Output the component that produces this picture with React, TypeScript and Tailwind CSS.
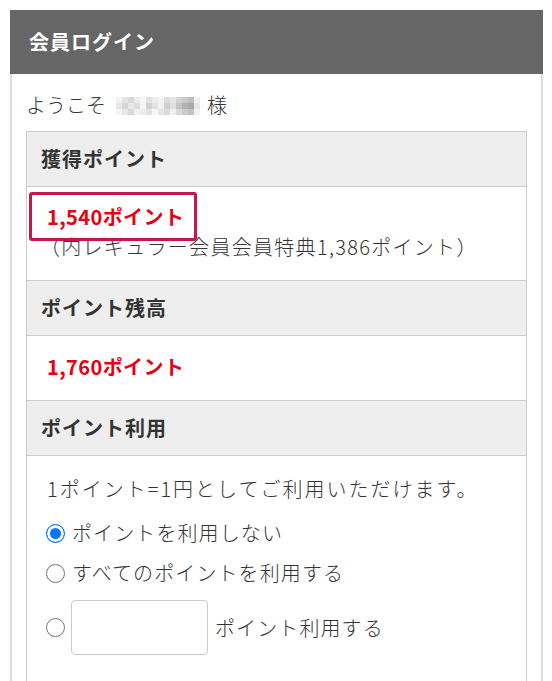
import { ReactNode } from 'react';

const font = "font-['Noto_Sans_CJK_JP','Noto_Sans',sans-serif]";

// mosaic that hides the member name
const mosaic = [
  'bg-[#f3f3f3]', 'bg-[#e4e4e4]', 'bg-[#d9d9d9]', 'bg-[#ececec]', 'bg-[#f6f6f6]', 'bg-[#e1e1e1]', 'bg-[#ededed]', 'bg-[#f2f2f2]', 'bg-[#dcdcdc]', 'bg-[#e6e6e6]', 'bg-[#d4d4d4]', 'bg-[#c9c9c9]', 'bg-[#bdbdbd]', 'bg-[#eeeeee]',
  'bg-[#ebe6e6]', 'bg-[#d6d6d6]', 'bg-[#e9e9e9]', 'bg-[#dedede]', 'bg-[#f4f4f4]', 'bg-[#d2d2d2]', 'bg-[#e3e3e3]', 'bg-[#f0f0f0]', 'bg-[#cfcfcf]', 'bg-[#e0e0e0]', 'bg-[#c4c4c4]', 'bg-[#b2b2b2]', 'bg-[#a9a9a9]', 'bg-[#e8e8e8]',
  'bg-[#f5f5f5]', 'bg-[#e7e7e7]', 'bg-[#dadada]', 'bg-[#f1f1f1]', 'bg-[#ececec]', 'bg-[#e2e2e2]', 'bg-[#f7f7f7]', 'bg-[#e5e5e5]', 'bg-[#dbdbdb]', 'bg-[#efefef]', 'bg-[#d8d8d8]', 'bg-[#cccccc]', 'bg-[#c2c2c2]', 'bg-[#f2f2f2]',
];

const radioCls =
  'appearance-none w-[19px] h-[19px] m-0 shrink-0 rounded-full border-[1.5px] border-[#767676] bg-white checked:border-[#0075ff] checked:bg-[#0075ff] checked:shadow-[inset_0_0_0_3px_white]';

function Head({ children }: { children: ReactNode }) {
  return (
    <div className="bg-[#eeeeee] border-b border-[#cccccc] px-[14px] py-[12px] leading-[30px] font-bold text-[#333333] tracking-[0.05em]">
      {children}
    </div>
  );
}

function Radio({ checked, children }: { checked?: boolean; children: ReactNode }) {
  return (
    <label className="flex items-center gap-[7px] -ml-[1px]">
      <input type="radio" name="usepoint" defaultChecked={checked} className={radioCls} />
      {children}
    </label>
  );
}

export default function App() {
  return (
    <div className={`px-[10px] pt-[10px] bg-white min-h-screen text-[20px] text-[#333333] ${font}`}>
      <div className="w-[533px]">
        <div className="h-[64px] bg-[#666666] text-white font-bold flex items-center pl-[19px] tracking-[0.05em]">
          会員ログイン
        </div>
        <div className="border-x-2 border-[#dddddd] px-[14px] pb-[40px]">
          <div className="pt-[16px] pb-[11px] leading-[30px] font-light flex items-center">
            ようこそ
            <span className="inline-grid grid-cols-[repeat(14,6px)] grid-rows-[repeat(3,6px)] ml-[10px] mr-[7px] mt-[2px]">
              {mosaic.map((c, i) => (
                <span key={i} className={c} />
              ))}
            </span>
            様
          </div>
          <div className="border-x border-t border-[#cccccc]">
            <Head>獲得ポイント</Head>
            <div className="relative border-b border-[#cccccc] pl-[20px] pt-[15px] pb-[18px] leading-[30px]">
              <div className="font-bold text-[#e60012] tracking-[0.02em]">1,540ポイント</div>
              <div className="font-light tracking-[0.065em] -ml-[7px]">（内レギュラー会員会員特典1,386ポイント）</div>
              <div className="absolute left-[2px] top-[5px] w-[168px] h-[49px] border-[3px] border-[#c7164d] rounded-[3px]" />
            </div>
            <Head>ポイント残高</Head>
            <div className="border-b border-[#cccccc] pl-[20px] pt-[16px] pb-[18px] leading-[30px] font-bold text-[#e60012] tracking-[0.02em]">
              1,760ポイント
            </div>
            <Head>ポイント利用</Head>
            <div className="pl-[20px] pt-[18px] pb-[40px] font-light">
              <p className="leading-[30px] tracking-[0.1em]">1ポイント=1円としてご利用いただけます。</p>
              <div className="mt-[14px] flex flex-col gap-[10px] leading-[30px] tracking-[0.055em]">
                <Radio checked>ポイントを利用しない</Radio>
                <Radio>すべてのポイントを利用する</Radio>
                <label className="flex items-center gap-[6px] -ml-[1px] mt-[2px]">
                  <input type="radio" name="usepoint" className={radioCls} />
                  <input type="text" className="w-[137px] h-[55px] border border-[#cccccc] rounded-[4px] mr-[1px] px-2" />
                  ポイント利用する
                </label>
              </div>
            </div>
          </div>
        </div>
      </div>
    </div>
  );
}
